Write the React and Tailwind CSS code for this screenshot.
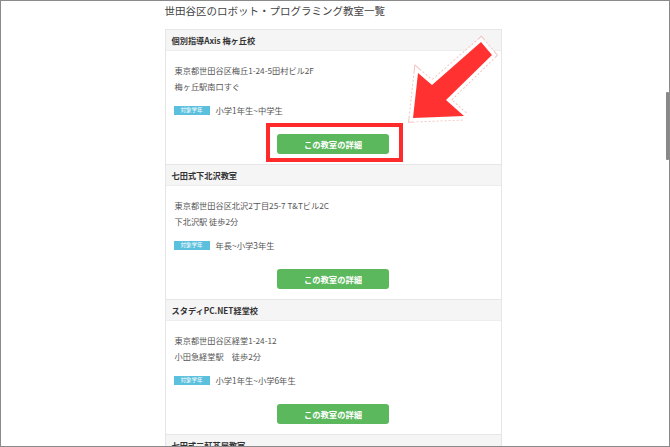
import React from 'react';

const schools = [
    {
        name: '個別指導Axis 梅ヶ丘校',
        address: '東京都世田谷区梅丘1-24-5田村ビル2F',
        station: '梅ヶ丘駅南口すぐ',
        grade: '小学1年生~中学生',
    },
    {
        name: '七田式下北沢教室',
        address: '東京都世田谷区北沢2丁目25-7 T&Tビル2C',
        station: '下北沢駅 徒歩2分',
        grade: '年長~小学3年生',
    },
    {
        name: 'スタディPC.NET経堂校',
        address: '東京都世田谷区経堂1-24-12',
        station: '小田急経堂駅\u3000徒歩2分',
        grade: '小学1年生~小学6年生',
    },
    {
        name: '七田式三軒茶屋教室',
        address: '東京都世田谷区太子堂4-1-1',
        station: '三軒茶屋駅 徒歩3分',
        grade: '年長~小学3年生',
    },
];

const SchoolCard = ({ school }) => (
    <div className="border-t border-x border-[#e6e6e6] bg-white">
        <div className="h-[20px] bg-[#f5f5f5] px-[6px] text-[8.2px] leading-[20px] font-bold text-[#333]">
            {school.name}
        </div>
        <div className="px-[9px] pt-[11px] pb-[10px] border-t border-[#ededed]">
            <p className="text-[8.2px] leading-[16px] text-[#555]">{school.address}</p>
            <p className="text-[8.2px] leading-[16px] text-[#555]">{school.station}</p>
            <div className="mt-[10px] h-[12px] flex items-center">
                <span className="h-[9px] w-[36px] ml-[-1px] bg-[#5bc0de] text-white text-[5.5px] leading-[9px] flex items-center justify-center">
                    対象学年
                </span>
                <span className="ml-[6px] text-[8.3px] text-[#555]">{school.grade}</span>
            </div>
            <div className="mt-[18px] flex justify-center">
                <button className="w-[112px] h-[20px] rounded-[3px] bg-[#5cb85c] text-white text-[8.3px] font-bold">
                    この教室の詳細
                </button>
            </div>
        </div>
    </div>
);

export default function App() {
    return (
        <div
            className="relative w-[670px] h-[447px] border border-[#8a8a8a] bg-white overflow-hidden flex"
            style={{ fontFamily: '"Noto Sans CJK JP", "Noto Sans", sans-serif' }}
        >
            <div className="flex-1">
                <div className="w-[337px] mx-auto">
                    <h1 className="pt-[3px] mb-[11px] leading-[14px] text-[10.5px] text-[#444] font-normal">
                        世田谷区のロボット・プログラミング教室一覧
                    </h1>
                    {schools.map(school => (
                        <SchoolCard key={school.name} school={school} />
                    ))}
                </div>
            </div>

            {/* scrollbar */}
            <div className="w-[4px]">
                <div className="mt-[91px] h-[68px] w-[3px] ml-[1px] bg-[#888] rounded-[1px]" />
            </div>

            {/* annotation: red box */}
            <div className="absolute left-[265px] top-[122px] w-[137px] h-[39px] border-[4px] border-[#ff2a2a]" />

            {/* annotation: arrow */}
            <svg
                className="absolute left-[395px] top-[25px] w-[110px] h-[100px]"
                viewBox="395 25 110 100"
            >
                <polygon
                    points="412,117 417,72 431,84 480,41 491,54 445,99 463,115"
                    fill="none"
                    stroke="#f6c2c2"
                    strokeWidth="9"
                    strokeDasharray="2 2"
                    strokeLinejoin="miter"
                />
                <polygon
                    points="412,117 417,72 431,84 480,41 491,54 445,99 463,115"
                    fill="none"
                    stroke="#ffffff"
                    strokeWidth="7"
                    strokeLinejoin="miter"
                />
                <polygon
                    points="412,117 417,72 431,84 480,41 491,54 445,99 463,115"
                    fill="#ff3131"
                />
            </svg>
        </div>
    );
}
